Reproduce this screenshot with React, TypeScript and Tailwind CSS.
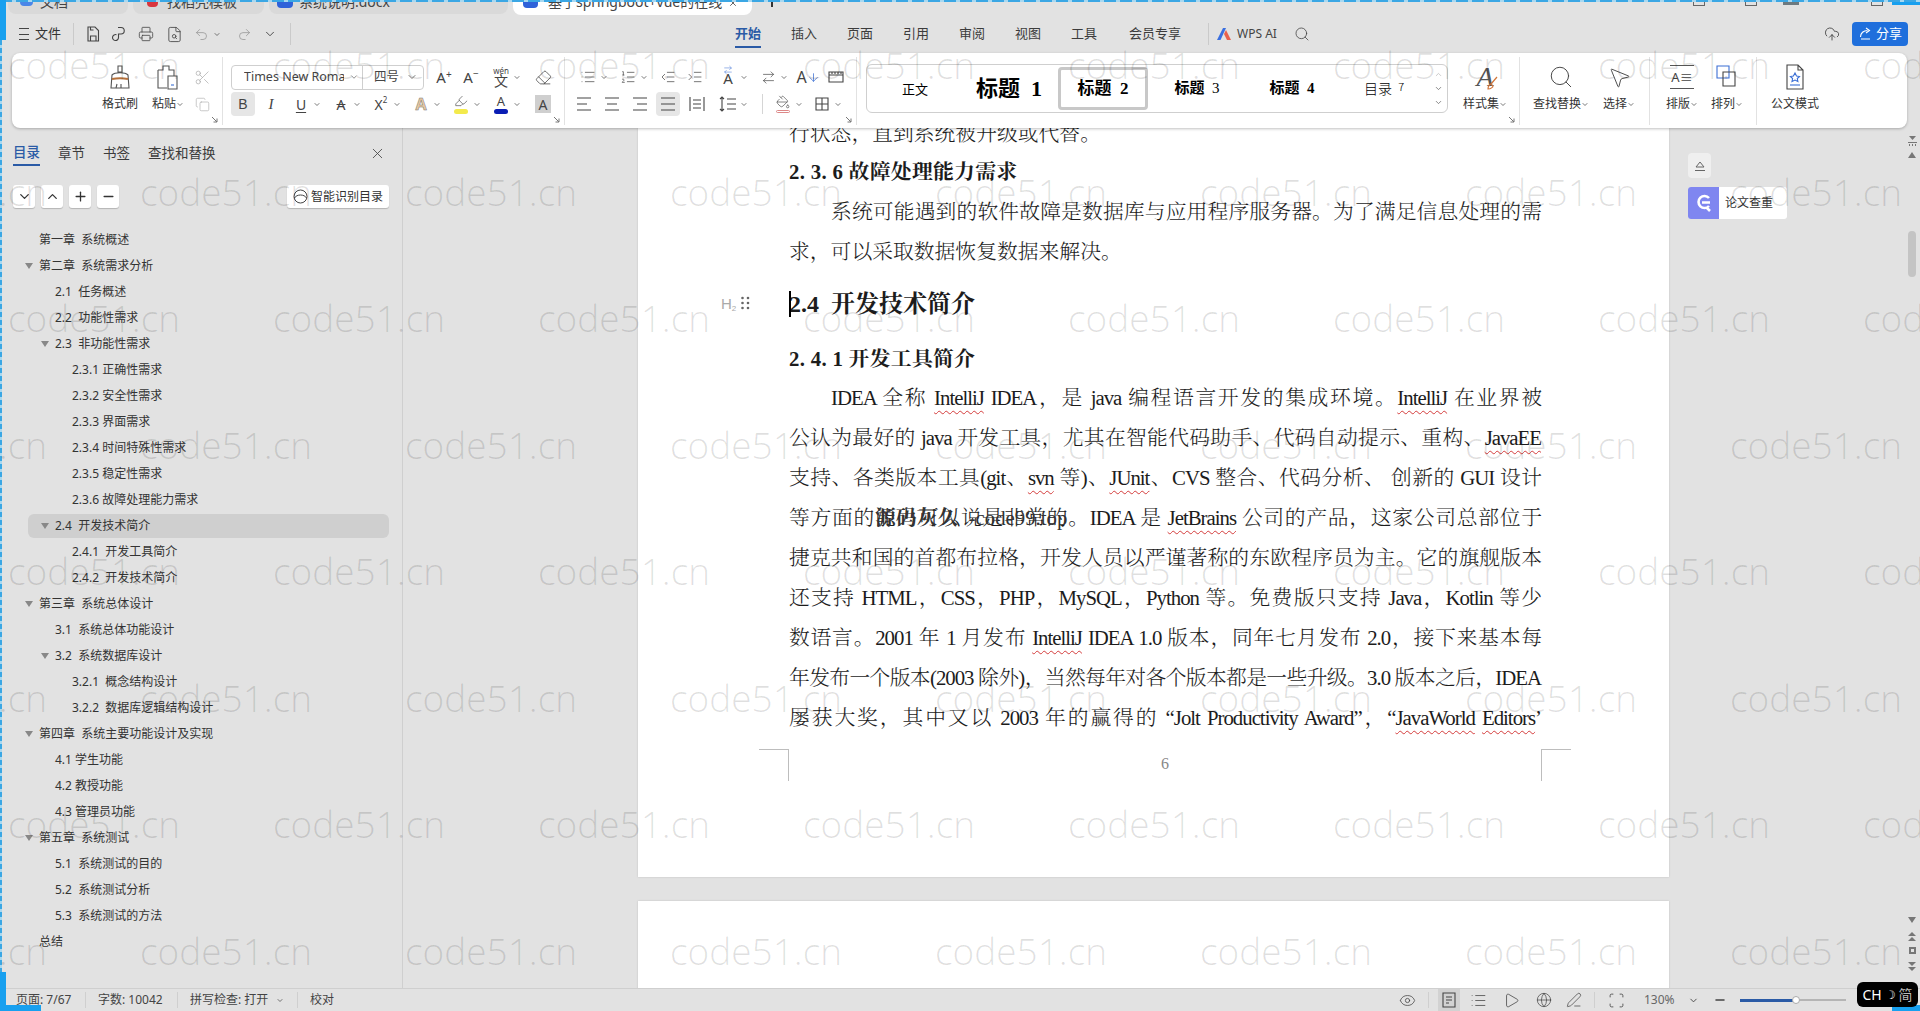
import React from "react";
import {
  ChevronDown, ChevronUp, Plus, Minus, X, Search, Printer, Scissors, Copy, Eraser, List, ListOrdered,
  Undo2, Redo2, MousePointer2, Eye, Play, Globe, PenLine, Scan, CloudUpload, IndentDecrease, IndentIncrease,
  ArrowRightLeft, ArrowDown, PaintBucket, FileSearch, Highlighter,
} from "lucide-react";

const UI = "font-['Noto_Sans','Noto_Sans_CJK_SC',sans-serif]";

const Chev = () => (
  <span className="flex w-[8px] justify-center text-[#555]">
    <ChevronDown size={9} strokeWidth={2.4} />
  </span>
);

function T({ cls = "", children }: { cls?: string; children: React.ReactNode }) {
  return <div className={"relative flex h-[24px] w-[24px] shrink-0 items-center justify-center text-[#444] " + cls}>{children}</div>;
}

function Lines({ d }: { d: string }) {
  return (
    <svg width="20" height="20" viewBox="0 0 20 20" fill="none" stroke="#444" strokeWidth="1.1">
      <path d={d} />
    </svg>
  );
}

function Corner() {
  return (
    <svg width="7" height="7" viewBox="0 0 7 7" className="absolute bottom-[2px] right-[4px]" fill="none" stroke="#777" strokeWidth="1">
      <path d="M1 1l5 5M6 2.5V6H2.5" />
    </svg>
  );
}

function BigTool({ cls, label, chev, children }: { cls: string; label: string; chev?: boolean; children: React.ReactNode }) {
  return (
    <div className={"flex shrink-0 flex-col items-center " + cls}>
      <div className="flex h-[26px] items-center justify-center">{children}</div>
      <div className="mt-[2px] flex h-[24px] items-center whitespace-nowrap text-[12px] text-[#333]">
        {label}
        {chev && <Chev />}
      </div>
    </div>
  );
}

function W({ children }: { children: React.ReactNode }) {
  return <span className="underline decoration-[#d43c3c] decoration-wavy decoration-1 underline-offset-[5px]">{children}</span>;
}

function L({ cls = "", children }: { cls?: string; children: React.ReactNode }) {
  return <p className={"relative h-[40px] leading-[40px] tracking-[-1px] [text-align-last:justify] text-justify " + cls}>{children}</p>;
}

function Tri() {
  return (
    <svg width="8" height="6" viewBox="0 0 8 6" className="shrink-0" fill="#888">
      <path d="M0 0h8L4 6z" />
    </svg>
  );
}

const toc: { t: string; l: 1 | 2 | 3; a?: boolean; on?: boolean }[] = [
  { t: "第一章  系统概述", l: 1 },
  { t: "第二章  系统需求分析", l: 1, a: true },
  { t: "2.1  任务概述", l: 2 },
  { t: "2.2  功能性需求", l: 2 },
  { t: "2.3  非功能性需求", l: 2, a: true },
  { t: "2.3.1 正确性需求", l: 3 },
  { t: "2.3.2 安全性需求", l: 3 },
  { t: "2.3.3 界面需求", l: 3 },
  { t: "2.3.4 时间特殊性需求", l: 3 },
  { t: "2.3.5 稳定性需求", l: 3 },
  { t: "2.3.6 故障处理能力需求", l: 3 },
  { t: "2.4  开发技术简介", l: 2, a: true, on: true },
  { t: "2.4.1  开发工具简介", l: 3 },
  { t: "2.4.2  开发技术简介", l: 3 },
  { t: "第三章  系统总体设计", l: 1, a: true },
  { t: "3.1  系统总体功能设计", l: 2 },
  { t: "3.2  系统数据库设计", l: 2, a: true },
  { t: "3.2.1  概念结构设计", l: 3 },
  { t: "3.2.2  数据库逻辑结构设计", l: 3 },
  { t: "第四章  系统主要功能设计及实现", l: 1, a: true },
  { t: "4.1 学生功能", l: 2 },
  { t: "4.2 教授功能", l: 2 },
  { t: "4.3 管理员功能", l: 2 },
  { t: "第五章  系统测试", l: 1, a: true },
  { t: "5.1  系统测试的目的", l: 2 },
  { t: "5.2  系统测试分析", l: 2 },
  { t: "5.3  系统测试的方法", l: 2 },
  { t: "总结", l: 1 },
];

function TocRow({ r }: { r: (typeof toc)[number] }) {
  const pad = r.on ? "ml-[28px] mr-[13px] my-px h-[24px] rounded-md bg-[#cfcfcf] pl-[13px]" : r.l === 1 ? "h-[26px] pl-[25px]" : r.l === 2 ? "h-[26px] pl-[41px]" : "h-[26px] pl-[58px]";
  return (
    <div className={"flex items-center whitespace-pre text-[12px] text-[#333] " + pad}>
      <span className="flex w-[14px] shrink-0 items-center">{r.a && <Tri />}</span>
      {r.t}
    </div>
  );
}

function Watermarks() {
  const rows = [0, 1, 2, 3, 4, 5, 6, 7];
  const cells = [0, 1, 2, 3, 4, 5, 6, 7];
  return (
    <div className="pointer-events-none absolute inset-0 z-40 overflow-hidden pt-[2px] font-['Open_Sans',sans-serif] text-[37px] font-light leading-[126.5px] text-black/[0.12]">
      {rows.map((r) => (
        <div key={r} className={"flex h-[126.5px] w-max " + (r % 2 === 0 ? "ml-[8px]" : "ml-[-125px]")}>
          {cells.map((c) => (
            <span key={c} className="w-[265px] shrink-0">code51.cn</span>
          ))}
        </div>
      ))}
    </div>
  );
}

function TabBar() {
  return (
    <div className="flex h-[15px] shrink-0 overflow-hidden text-[14px] text-[#444]">
      <div className="ml-[8px] flex h-[14px] w-[120px] rounded-b-lg bg-[#d9d9d9] pl-[12px]">
        <span className="h-[6px] w-[13px] rounded-b-sm bg-[#4a86e8]" />
        <span className="ml-[7px] -mt-[8px] leading-[20px]">文档</span>
      </div>
      <div className="ml-[5px] flex h-[14px] w-[131px] rounded-b-lg bg-[#d9d9d9] pl-[14px]">
        <span className="h-[7px] w-[11px] rounded-b-sm bg-[#d9363e]" />
        <span className="ml-[9px] -mt-[8px] leading-[20px]">找稻壳模板</span>
      </div>
      <div className="ml-[5px] flex h-[14px] w-[239px] rounded-b-lg bg-[#d9d9d9] pl-[8px]">
        <span className="h-[8px] w-[16px] rounded-b-sm bg-[#2f62d9]" />
        <span className="ml-[6px] -mt-[8px] leading-[20px]">系统说明.docx</span>
      </div>
      <div className="ml-[5px] flex h-[15px] w-[239px] rounded-b-lg bg-white pl-[10px]">
        <span className="h-[8px] w-[15px] rounded-b-sm bg-[#2f62d9]" />
        <span className="ml-[10px] -mt-[8px] leading-[20px] whitespace-nowrap">基于springboot+vue的在线</span>
        <X size={10} className="ml-auto mr-[14px] -mt-[2px]" />
      </div>
      <span className="ml-[19px] h-[7px] w-[2px] bg-[#333]" />
      <div className="ml-[920px] flex gap-[40px]">
        <span className="h-[6px] w-[12px] border-b border-x border-[#666]" />
        <span className="h-[6px] w-[12px] border-b border-x border-[#666]" />
        <span className="-ml-[14px] h-[5px] w-[16px] bg-[#6d7a80]" />
        <span className="ml-[32px] h-[6px] w-[12px] border-b border-x border-[#666]" />
      </div>
      <span className="absolute right-0 top-0 h-[5px] w-[28px] bg-[#18a0ef]" />
    </div>
  );
}

function MenuItem({ cls, children, on }: { cls: string; children: React.ReactNode; on?: boolean }) {
  return (
    <div className={"relative flex h-[38px] shrink-0 items-center justify-center text-[13px] " + cls + (on ? " font-bold text-[#2b5ba6]" : " text-[#3c3c3c]")}>
      {children}
      {on && <span className="absolute bottom-[5px] left-1/2 h-[2px] w-[26px] -translate-x-1/2 bg-[#2b5ba6]" />}
    </div>
  );
}

function ToolBar() {
  return (
    <div className="flex h-[38px] shrink-0 items-center">
      <div className="ml-[19px] flex h-[14px] w-[10px] flex-col justify-between py-[1px]">
        <span className="h-px bg-[#444]" />
        <span className="h-px bg-[#444]" />
        <span className="h-px bg-[#444]" />
      </div>
      <span className="ml-[6px] text-[13px] text-[#333]">文件</span>
      <span className="ml-[12px] h-[22px] w-px bg-[#cacaca]" />
      <T cls="ml-[7px] w-[24px]">
        <Lines d="M5 3h7l3.5 3.5V17H5zM7.5 17v-5h5.5v5M7.5 3v3h3" />
      </T>
      <T cls="ml-[2px]">
        <Lines d="M9 3.5h3a3 3 0 0 1 0 6.5H9.5v3.5a3 3 0 1 1-2-2.8" />
      </T>
      <T cls="ml-[3px] text-[#444]"><Printer size={16} strokeWidth={1.2} /></T>
      <T cls="ml-[4px]"><FileSearch size={17} strokeWidth={1.2} /></T>
      <T cls="ml-[3px] text-[#999]"><Undo2 size={15} strokeWidth={1.3} /></T>
      <span className="text-[#aaa]"><Chev /></span>
      <T cls="ml-[11px] text-[#999]"><Redo2 size={15} strokeWidth={1.3} /></T>
      <T cls="ml-[2px]"><ChevronDown size={14} strokeWidth={1.6} /></T>
      <span className="ml-[8px] h-[22px] w-px bg-[#cacaca]" />
      <MenuItem cls="ml-[429px] w-[56px]" on>开始</MenuItem>
      <MenuItem cls="w-[56px]">插入</MenuItem>
      <MenuItem cls="w-[56px]">页面</MenuItem>
      <MenuItem cls="w-[56px]">引用</MenuItem>
      <MenuItem cls="w-[56px]">审阅</MenuItem>
      <MenuItem cls="w-[56px]">视图</MenuItem>
      <MenuItem cls="w-[56px]">工具</MenuItem>
      <MenuItem cls="ml-[9px] w-[68px]">会员专享</MenuItem>
      <span className="ml-[19px] h-[22px] w-px bg-[#cacaca]" />
      <svg width="14" height="14" viewBox="0 0 14 14" className="ml-[8px]">
        <path d="M0 13L6 1h3L3.5 13z" fill="#3a6fe0" />
        <path d="M7 7l2-4 5 10h-4z" fill="#e8614d" />
      </svg>
      <span className="ml-[6px] text-[12px] text-[#444]">WPS AI</span>
      <Search size={16} strokeWidth={1.2} className="ml-[17px] text-[#444]" />
      <CloudUpload size={16} strokeWidth={1.2} className="ml-[514px] text-[#333]" />
      <div className="ml-[12px] flex h-[24px] w-[56px] items-center justify-center gap-[2px] rounded bg-[#1f6fdc] text-[13px] text-white">
        <svg width="16" height="16" viewBox="0 0 16 16" fill="none" stroke="white" strokeWidth="1.1">
          <path d="M3 13h9M2.5 11c0-4 3-6.5 7-6.5M8 2l3.5 2.5L8 7" />
        </svg>
        分享
      </div>
    </div>
  );
}

function Ribbon() {
  return (
    <div className={"ml-[12px] flex h-[75px] w-[1895px] shrink-0 rounded-lg bg-white pt-[4px] shadow-[0_1px_3px_rgba(0,0,0,0.25)]"}>
      {/* clipboard */}
      <div className="relative flex h-[68px] w-[211px] shrink-0 border-r border-[#e2e2e2] pt-[7px]">
        <BigTool cls="ml-[90px] w-[36px]" label="格式刷">
          <svg width="24" height="26" viewBox="0 0 24 26" fill="none" stroke="#555" strokeWidth="1.1">
            <path d="M10 2h4v6h-4zM4 11c3-3 13-3 16 0l1 13H3z" />
            <path d="M4 15c5-1 11-1 16 0" stroke="#b5713c" strokeWidth="2" />
            <path d="M8 24l1-4M13 24v-4" />
          </svg>
        </BigTool>
        <BigTool cls="ml-[12px] w-[36px]" label="粘贴" chev>
          <svg width="24" height="26" viewBox="0 0 24 26" fill="none" stroke="#555" strokeWidth="1.1">
            <path d="M2 6h5V2h6v4h5v6M2 6v18h9" />
            <path d="M12 12h9v13h-9z" />
            <path d="M15 21h3" stroke="#3b6fd4" />
          </svg>
        </BigTool>
        <div className="ml-[4px] flex w-[24px] flex-col items-center text-[#aaa]">
          <div className="flex h-[26px] items-center"><Scissors size={17} strokeWidth={1} /></div>
          <div className="mt-[2px] flex h-[24px] items-center"><Copy size={15} strokeWidth={1} /></div>
        </div>
        <Corner />
      </div>
      {/* font */}
      <div className="relative flex h-[68px] w-[342px] shrink-0 flex-col border-r border-[#e2e2e2] pl-[8px] pt-[7px]">
        <div className="flex h-[26px] items-center">
          <div className="flex h-[25px] w-[193px] shrink-0 items-center rounded border border-[#cfcfcf] text-[12.5px] text-[#444]">
            <span className="ml-[12px] w-[100px] overflow-hidden whitespace-nowrap">Times New Roman</span>
            <ChevronDown size={10} className="ml-[5px] text-[#777]" />
            <span className="ml-[3px] h-full w-px bg-[#cfcfcf]" />
            <span className="ml-[11px] w-[28px]">四号</span>
            <ChevronDown size={12} className="ml-[4px] text-[#777]" />
          </div>
          <T cls="ml-[7px] w-[26px] text-[15px]">A<span className="-mt-[6px] text-[10px] text-[#444]">+</span></T>
          <T cls="ml-px w-[26px] text-[15px]">A<span className="-mt-[8px] text-[10px]">−</span></T>
          <T cls="ml-[5px] flex-col text-[14px] leading-[12px]">
            <span className="text-[8px] leading-[8px]">wén</span>
            <span>文</span>
          </T>
          <Chev />
          <T cls="ml-[10px]"><Eraser size={17} strokeWidth={1.1} /></T>
        </div>
        <div className="mt-[2px] flex h-[24px] items-center">
          <T cls="rounded bg-[#e6e6e6] font-['Liberation_Sans',sans-serif] text-[14px] text-[#333]">B</T>
          <T cls="ml-[4px] font-['Liberation_Serif',serif] text-[15px] italic">I</T>
          <T cls="ml-[6px] text-[14px] underline underline-offset-2">U</T>
          <Chev />
          <T cls="ml-[8px] text-[14px] line-through">A</T>
          <Chev />
          <T cls="ml-[8px] text-[14px]">X<sup className="text-[8px]">2</sup></T>
          <Chev />
          <T cls="ml-[8px] text-[16px] font-bold text-[#e8c9a0] [-webkit-text-stroke:0.5px_#777]">A</T>
          <Chev />
          <T cls="ml-[8px]">
            <Highlighter size={14} strokeWidth={1.1} className="-mt-[6px]" />
            <span className="absolute bottom-[2px] left-[5px] h-[5px] w-[14px] rounded-sm bg-[#f3ea4c]" />
          </T>
          <Chev />
          <T cls="ml-[8px] text-[13px]">
            <span className="-mt-[5px]">A</span>
            <span className="absolute bottom-[2px] left-[5px] h-[5px] w-[14px] rounded-sm bg-[#0a1db4]" />
          </T>
          <Chev />
          <T cls="ml-[10px]"><span className="flex h-[18px] w-[16px] items-center justify-center bg-[#cfcfcf] text-[14px]">A</span></T>
        </div>
        <Corner />
      </div>
      {/* paragraph */}
      <div className="relative flex h-[68px] w-[292px] shrink-0 flex-col border-r border-[#e2e2e2] pt-[7px]">
        <div className="flex h-[26px] items-center">
          <T cls="ml-[11px]"><List size={16} strokeWidth={1.1} /></T>
          <Chev />
          <T cls="ml-[8px]"><ListOrdered size={16} strokeWidth={1.1} /></T>
          <Chev />
          <T cls="ml-[8px]"><IndentDecrease size={16} strokeWidth={1.1} /></T>
          <T cls="ml-[3px]"><IndentIncrease size={16} strokeWidth={1.1} /></T>
          <T cls="ml-[9px] text-[15px]">
            <span className="mt-[3px]">A</span>
            <ArrowRightLeft size={10} strokeWidth={1.2} className="absolute top-0 left-[7px] text-[#3b6fd4]" />
          </T>
          <Chev />
          <T cls="ml-[8px]"><ArrowRightLeft size={15} strokeWidth={1.1} /></T>
          <Chev />
          <T cls="ml-[8px] text-[16px]">A<ArrowDown size={13} strokeWidth={1.4} className="text-[#3b6fd4]" /></T>
          <T cls="ml-[4px]"><Lines d="M3 5h14v10H3zM3 8h14M6 5v2M9 5v2M12 5v2M15 5v2" /></T>
        </div>
        <div className="mt-[2px] flex h-[24px] items-center">
          <T cls="ml-[7px]"><Lines d="M3 4h14M3 10h10M3 16h14" /></T>
          <T cls="ml-[4px]"><Lines d="M3 4h14M5 10h10M3 16h14" /></T>
          <T cls="ml-[4px]"><Lines d="M3 4h14M7 10h10M3 16h14" /></T>
          <T cls="ml-[4px] rounded bg-[#e6e6e6]"><Lines d="M3 4h14M3 10h14M3 16h14" /></T>
          <T cls="ml-[5px]"><Lines d="M3 3v14M17 3v14M6 6h8M6 10h8M6 14h8" /></T>
          <T cls="ml-[7px]"><Lines d="M4 3v14M2 5l2-2 2 2M2 15l2 2 2-2M9 5h9M9 10h9M9 15h9" /></T>
          <Chev />
          <span className="ml-[14px] h-[20px] w-px bg-[#d5d5d5]" />
          <T cls="ml-[8px]">
            <PaintBucket size={14} strokeWidth={1.1} className="-mt-[5px]" />
            <span className="absolute bottom-[3px] left-[5px] h-[3px] w-[14px] rounded-sm border border-[#d88]" />
          </T>
          <Chev />
          <T cls="ml-[7px]"><Lines d="M4 4h12v12H4zM10 4v12M4 10h12" /></T>
          <Chev />
        </div>
        <Corner />
      </div>
      {/* styles */}
      <div className="relative flex h-[68px] w-[663px] shrink-0 border-r border-[#e2e2e2] pl-[9px] pt-[7px]">
        <div className="flex h-[49px] w-[582px] shrink-0 items-center rounded-md border border-[#cfcfcf] font-['Liberation_Serif','Noto_Sans_CJK_SC',serif] text-black">
          <div className="flex w-[96px] justify-center font-['Noto_Sans_CJK_SC',sans-serif] text-[13px]">正文</div>
          <div className="flex w-[92px] justify-center text-[22px] font-bold whitespace-pre">标题  1</div>
          <div className="ml-[3px] flex h-[43px] w-[90px] items-center justify-center rounded-sm border-[3px] border-[#c8c8c8] text-[17px] font-bold whitespace-pre">标题  2</div>
          <div className="flex w-[98px] justify-center text-[15px] font-bold whitespace-pre">标题  <span className="font-normal">3</span></div>
          <div className="flex w-[92px] justify-center text-[15px] font-bold whitespace-pre">标题  4</div>
          <div className="flex w-[92px] justify-center text-[14px] whitespace-pre font-['Noto_Sans_CJK_SC',sans-serif] font-light">目录  <span className="text-[11px]">7</span></div>
          <div className="flex w-[17px] flex-col items-center gap-[5px] text-[#666]">
            <ChevronUp size={9} strokeWidth={2} className="text-[#bbb]" />
            <ChevronDown size={9} strokeWidth={2} />
            <ChevronDown size={9} strokeWidth={2} />
          </div>
        </div>
        <BigTool cls="ml-[7px] w-[60px]" label="样式集" chev>
          <div className="relative flex h-[26px] w-[26px] items-center justify-center font-['Liberation_Serif',serif] text-[28px] font-light italic leading-none text-[#555]">
            A
            <svg width="12" height="14" viewBox="0 0 12 14" className="absolute bottom-0 right-0" fill="none" stroke="#d2763a" strokeWidth="1.2">
              <path d="M11 1L5 8M2 13c0-3 2-5 3-5l2 2c0 1-2 3-5 3z" />
            </svg>
          </div>
        </BigTool>
        <Corner />
      </div>
      {/* find */}
      <div className="flex h-[68px] w-[130px] shrink-0 border-r border-[#e2e2e2] pt-[7px]">
        <BigTool cls="ml-[11px] w-[60px]" label="查找替换" chev>
          <Search size={26} strokeWidth={0.9} className="text-[#444]" />
        </BigTool>
        <BigTool cls="ml-[10px] w-[36px]" label="选择" chev>
          <MousePointer2 size={25} strokeWidth={0.9} className="text-[#444]" />
        </BigTool>
      </div>
      {/* layout */}
      <div className="flex h-[68px] w-[107px] shrink-0 border-r border-[#e2e2e2] pt-[7px]">
        <BigTool cls="ml-[12px] w-[40px]" label="排版" chev>
          <div className="flex h-[24px] w-[24px] flex-col justify-between border-y border-[#555] text-center text-[13px] leading-[22px] text-[#444]">A≡</div>
        </BigTool>
        <BigTool cls="ml-[5px] w-[40px]" label="排列" chev>
          <svg width="22" height="24" viewBox="0 0 22 24" fill="none" stroke="#444" strokeWidth="1.1">
            <path d="M1 1h12v12H1z" stroke="#3b6fd4" />
            <path d="M7 7h12v14H7z" />
          </svg>
        </BigTool>
      </div>
      {/* official doc mode */}
      <div className="pt-[7px]">
        <BigTool cls="ml-[13px] w-[50px]" label="公文模式">
          <svg width="20" height="26" viewBox="0 0 20 26" fill="none" stroke="#444" strokeWidth="1.1">
            <path d="M2 1h11l5 5v19H2zM13 1v5h5" />
            <path d="M10 9l1.5 3 3 .5-2.2 2 .6 3-2.9-1.5L7 17.5l.6-3-2.2-2 3-.5z" stroke="#3b6fd4" />
            <path d="M5 21h10" stroke="#3b6fd4" />
          </svg>
        </BigTool>
      </div>
    </div>
  );
}

function Panel() {
  const tabs = ["章节", "书签", "查找和替换"];
  return (
    <div className="flex w-[403px] shrink-0 flex-col border-r border-[#cfcfcf] pt-[12px]">
      <div className="flex h-[26px] items-center pl-[13px] text-[13.5px] text-[#3c3c3c]">
        <span className="flex h-[26px] items-center border-b-2 border-[#2b5ba6] font-medium text-[#2b5ba6]">目录</span>
        {tabs.map((t) => (
          <span key={t} className="ml-[18px]">{t}</span>
        ))}
        <X size={17} strokeWidth={1.2} className="ml-auto mr-[16px] text-[#444]" />
      </div>
      <div className="mt-[19px] flex h-[23px] items-stretch pl-[13px] text-[#333]">
        {[ChevronDown, ChevronUp, Plus, Minus].map((I, i) => (
          <div key={i} className={"flex w-[22px] items-center justify-center rounded-[3px] bg-white shadow-[0_1px_1px_rgba(0,0,0,0.2)] " + (i ? "ml-[6px]" : "")}>
            <I size={15} strokeWidth={2.1} />
          </div>
        ))}
        <div className="ml-auto mr-[13px] flex w-[102px] items-center justify-center gap-[3px] rounded-[3px] bg-white text-[12px] shadow-[0_1px_1px_rgba(0,0,0,0.2)]">
          <svg width="15" height="15" viewBox="0 0 15 15" fill="none" stroke="#444" strokeWidth="1">
            <circle cx="7.5" cy="7.5" r="6.5" />
            <path d="M1.5 9c2-4 10-4 12 0" />
          </svg>
          智能识别目录
        </div>
      </div>
      <div className="mt-[19px]">
        {toc.map((r) => (
          <TocRow key={r.t} r={r} />
        ))}
      </div>
    </div>
  );
}

function Page() {
  return (
    <div className="ml-[235px] w-[1031px] shrink-0">
      <div className="h-[749px] overflow-hidden bg-white pl-[151px] font-['Liberation_Serif','Noto_Serif_CJK_SC','Noto_Sans_CJK_SC',serif] text-[20.8px] font-light text-[#1c1c1c] shadow-[0_0_2px_rgba(0,0,0,0.15)]">
        <div className="-mt-[14px] w-[752px]">
          <p className="h-[40px] leading-[40px]">行状态，直到系统被升级或代替。</p>
          <h3 className="h-[38px] whitespace-pre font-bold leading-[36px] tracking-[0.3px]">2. 3. 6 故障处理能力需求</h3>
          <L cls="pl-[42px]">系统可能遇到的软件故障是数据库与应用程序服务器。为了满足信息处理的需</L>
          <p className="h-[40px] leading-[40px]">求，可以采取数据恢复数据来解决。</p>
          <h2 className="relative h-[64px] whitespace-pre text-[24px] font-bold leading-[64px]">
            2.4  开发技术简介
            <span className="absolute left-0 top-[19px] h-[26px] w-[2px] bg-black" />
            <span className="absolute left-[-68px] top-[19px] flex h-[24px] items-center gap-[5px] font-['Liberation_Sans',sans-serif] text-[15px] font-normal leading-none text-[#aaa]">
              <span>H<sub className="text-[8px]">2</sub></span>
              <svg width="9" height="14" viewBox="0 0 9 14" fill="#666">
                <circle cx="1.5" cy="2" r="1.3" /><circle cx="7" cy="2" r="1.3" />
                <circle cx="1.5" cy="7" r="1.3" /><circle cx="7" cy="7" r="1.3" />
                <circle cx="1.5" cy="12" r="1.3" /><circle cx="7" cy="12" r="1.3" />
              </svg>
            </span>
          </h2>
          <h3 className="h-[42px] whitespace-pre pt-[2px] font-bold leading-[42px] tracking-[0.3px]">2. 4. 1 开发工具简介</h3>
          <L cls="pl-[42px]">IDEA 全称 <W>IntelliJ</W> IDEA，是 java 编程语言开发的集成环境。<W>IntelliJ</W> 在业界被</L>
          <L>公认为最好的 java 开发工具，尤其在智能代码助手、代码自动提示、重构、<W>JavaEE</W></L>
          <L>支持、各类版本工具(git、<W>svn</W> 等)、<W>JUnit</W>、CVS 整合、代码分析、 创新的 GUI 设计</L>
          <L>
            等方面的能力可以说是非常的。IDEA 是 <W>JetBrains</W> 公司的产品，这家公司总部位于
            <span className="absolute left-[86px] top-0 whitespace-pre tracking-normal text-[#333]">
              <span className="font-bold">源码灰久</span>  -code99.top
            </span>
          </L>
          <L>捷克共和国的首都布拉格，开发人员以严谨著称的东欧程序员为主。它的旗舰版本</L>
          <L>还支持 HTML，CSS，PHP，MySQL，Python 等。免费版只支持 Java，Kotlin 等少</L>
          <L>数语言。2001 年 1 月发布 <W>IntelliJ</W> IDEA 1.0 版本，同年七月发布 2.0，接下来基本每</L>
          <L>年发布一个版本(2003 除外)，当然每年对各个版本都是一些升级。3.0 版本之后，IDEA</L>
          <L>屡获大奖，其中又以 2003 年的赢得的 “Jolt Productivity Award”，“<W>JavaWorld</W> <W>Editors</W>’</L>
        </div>
        <div className="ml-[-30px] mt-[11px] flex h-[32px] w-[812px]">
          <span className="h-full w-[30px] border-r border-t border-[#bdbdbd]" />
          <span className="flex-1 pt-[2px] text-center font-['Liberation_Serif',serif] text-[16px] leading-[26px] text-[#888]">6</span>
          <span className="h-full w-[30px] border-l border-t border-[#bdbdbd]" />
        </div>
      </div>
      <div className="mt-[24px] h-[200px] bg-white shadow-[0_0_2px_rgba(0,0,0,0.15)]" />
    </div>
  );
}

function RightRail() {
  return (
    <>
      <div className="ml-[19px] flex w-[99px] shrink-0 flex-col pt-[25px]">
        <div className="flex h-[25px] w-[23px] items-center justify-center rounded-sm bg-[#efefef]">
          <svg width="12" height="12" viewBox="0 0 12 12" fill="none" stroke="#666" strokeWidth="1">
            <path d="M2 7l4-5 4 5zM1 10.5h10" />
          </svg>
        </div>
        <div className="mt-[9px] flex h-[32px] w-[99px] items-center overflow-hidden rounded-[3px] bg-white text-[12px] text-[#333]">
          <span className="flex h-full w-[31px] items-center justify-center bg-[#7f86f0]">
            <svg width="16" height="18" viewBox="0 0 16 18" fill="none" stroke="white" strokeWidth="2.6">
              <path d="M13 4a6 6 0 1 0 0 8M6 8.5h8M11 14l3 3" />
            </svg>
          </span>
          <span className="ml-[6px]">论文查重</span>
        </div>
      </div>
      <div className="ml-[121px] flex w-[8px] shrink-0 flex-col items-center text-[#777]">
        <svg width="9" height="10" viewBox="0 0 9 10" className="mt-[8px]" fill="#777"><path d="M1 0h7L4.5 4zM0 6h9v1H0zM1 8h1v2H1zM4 8h1v2H4zM7 8h1v2H7z" /></svg>
        <svg width="8" height="6" viewBox="0 0 8 6" className="mt-[6px]" fill="#777"><path d="M4 0l4 6H0z" /></svg>
        <span className="mt-[73px] h-[46px] w-[8px] shrink-0 rounded bg-[#c4c4c4]" />
        <svg width="8" height="6" viewBox="0 0 8 6" className="mt-[640px]" fill="#777"><path d="M0 0h8L4 6z" /></svg>
        <svg width="8" height="9" viewBox="0 0 8 9" className="mt-[9px]" fill="#777"><path d="M4 0l4 4H0zM4 5l4 4H0z" /></svg>
        <span className="mt-[6px] h-[7px] w-[7px] border-2 border-[#777]" />
        <svg width="8" height="9" viewBox="0 0 8 9" className="mt-[8px]" fill="#777"><path d="M0 0h8L4 4zM0 5h8L4 9z" /></svg>
      </div>
    </>
  );
}

function StatusBar() {
  const Sep = ({ cls }: { cls: string }) => <span className={"h-[16px] w-px bg-[#cfcfcf] " + cls} />;
  return (
    <div className="relative flex h-[23px] shrink-0 items-center border-t border-[#cfcfcf] text-[12px] text-[#444]">
      <span className="ml-[16px] w-[57px]">页面: 7/67</span>
      <Sep cls="ml-[12px]" />
      <span className="ml-[12px] w-[68px]">字数: 10042</span>
      <Sep cls="ml-[11px]" />
      <span className="ml-[12px] w-[80px]">拼写检查: 打开</span>
      <span className="ml-[6px]"><Chev /></span>
      <Sep cls="ml-[13px]" />
      <span className="ml-[12px]">校对</span>
      <div className="absolute left-[1399px] top-0 flex h-[22px] items-center text-[#444]">
        <Eye size={17} strokeWidth={1.1} />
        <Sep cls="ml-[12px]" />
        <div className="ml-[9px] flex h-[22px] w-[22px] items-center justify-center bg-[#d2d2d2]">
          <Lines d="M4 3h12v14H4zM7 7h6M7 10h6M7 13h3" />
        </div>
        <span className="ml-[10px]"><List size={17} strokeWidth={1.1} /></span>
        <Play size={17} strokeWidth={1.1} className="ml-[16px]" />
        <Globe size={16} strokeWidth={1.1} className="ml-[16px]" />
        <PenLine size={16} strokeWidth={1.1} className="ml-[14px]" />
        <Sep cls="ml-[12px]" />
        <Scan size={17} strokeWidth={1.2} className="ml-[13px]" />
        <span className="ml-[19px] w-[36px] text-[12px] text-[#666]">130%</span>
        <ChevronDown size={11} strokeWidth={2} className="ml-[8px]" />
        <Minus size={14} strokeWidth={2.2} className="ml-[14px]" />
        <div className="relative ml-[13px] flex h-[10px] w-[106px] items-center">
          <span className="h-[3px] w-[56px] bg-[#2b5ba6]" />
          <span className="h-[2px] flex-1 bg-[#b5b5b5]" />
          <span className="absolute left-[52px] h-[8px] w-[8px] rounded-full border border-[#aaa] bg-white" />
        </div>
      </div>
    </div>
  );
}

function Decor() {
  return (
    <div className="pointer-events-none">
      <div className="absolute left-0 right-0 top-0 z-30 h-[2px] bg-[repeating-linear-gradient(90deg,#3ba7e4_0_12px,#a8d8f0_12px_16px)]" />
      <div className="absolute bottom-0 left-0 top-0 z-30 w-[2px] bg-[repeating-linear-gradient(180deg,#3ba7e4_0_5px,#a8d8f0_5px_8px)]" />
      <div className="absolute left-0 top-0 z-30 h-[40px] w-[6px] bg-[#18a0ef]" />
      <div className="absolute bottom-0 left-0 z-30 h-[39px] w-[6px] bg-[#18a0ef]" />
      <div className="absolute bottom-0 left-0 z-30 h-[6px] w-[41px] bg-[#18a0ef]" />
      <div className="absolute bottom-0 right-0 z-30 h-[6px] w-[28px] bg-[#18a0ef]" />
      <div className="absolute bottom-[4px] right-[2px] z-50 flex h-[25px] w-[61px] items-center justify-center gap-[3px] rounded-md bg-black font-['Noto_Sans','Noto_Sans_CJK_SC',sans-serif] text-[14px] text-white">
        CH <span className="text-[12px]">☽</span> <span className="text-[#bbb]">简</span>
      </div>
    </div>
  );
}

export default function App() {
  return (
    <div className={"relative flex h-[1011px] w-[1920px] flex-col overflow-hidden bg-[#e2e2e2] " + UI}>
      <TabBar />
      <ToolBar />
      <div className="relative z-10 flex h-[75px] shrink-0"><Ribbon /></div>
      <div className="flex h-[860px] shrink-0 overflow-hidden">
        <Panel />
        <Page />
        <RightRail />
      </div>
      <StatusBar />
      <Decor />
      <Watermarks />
    </div>
  );
}
